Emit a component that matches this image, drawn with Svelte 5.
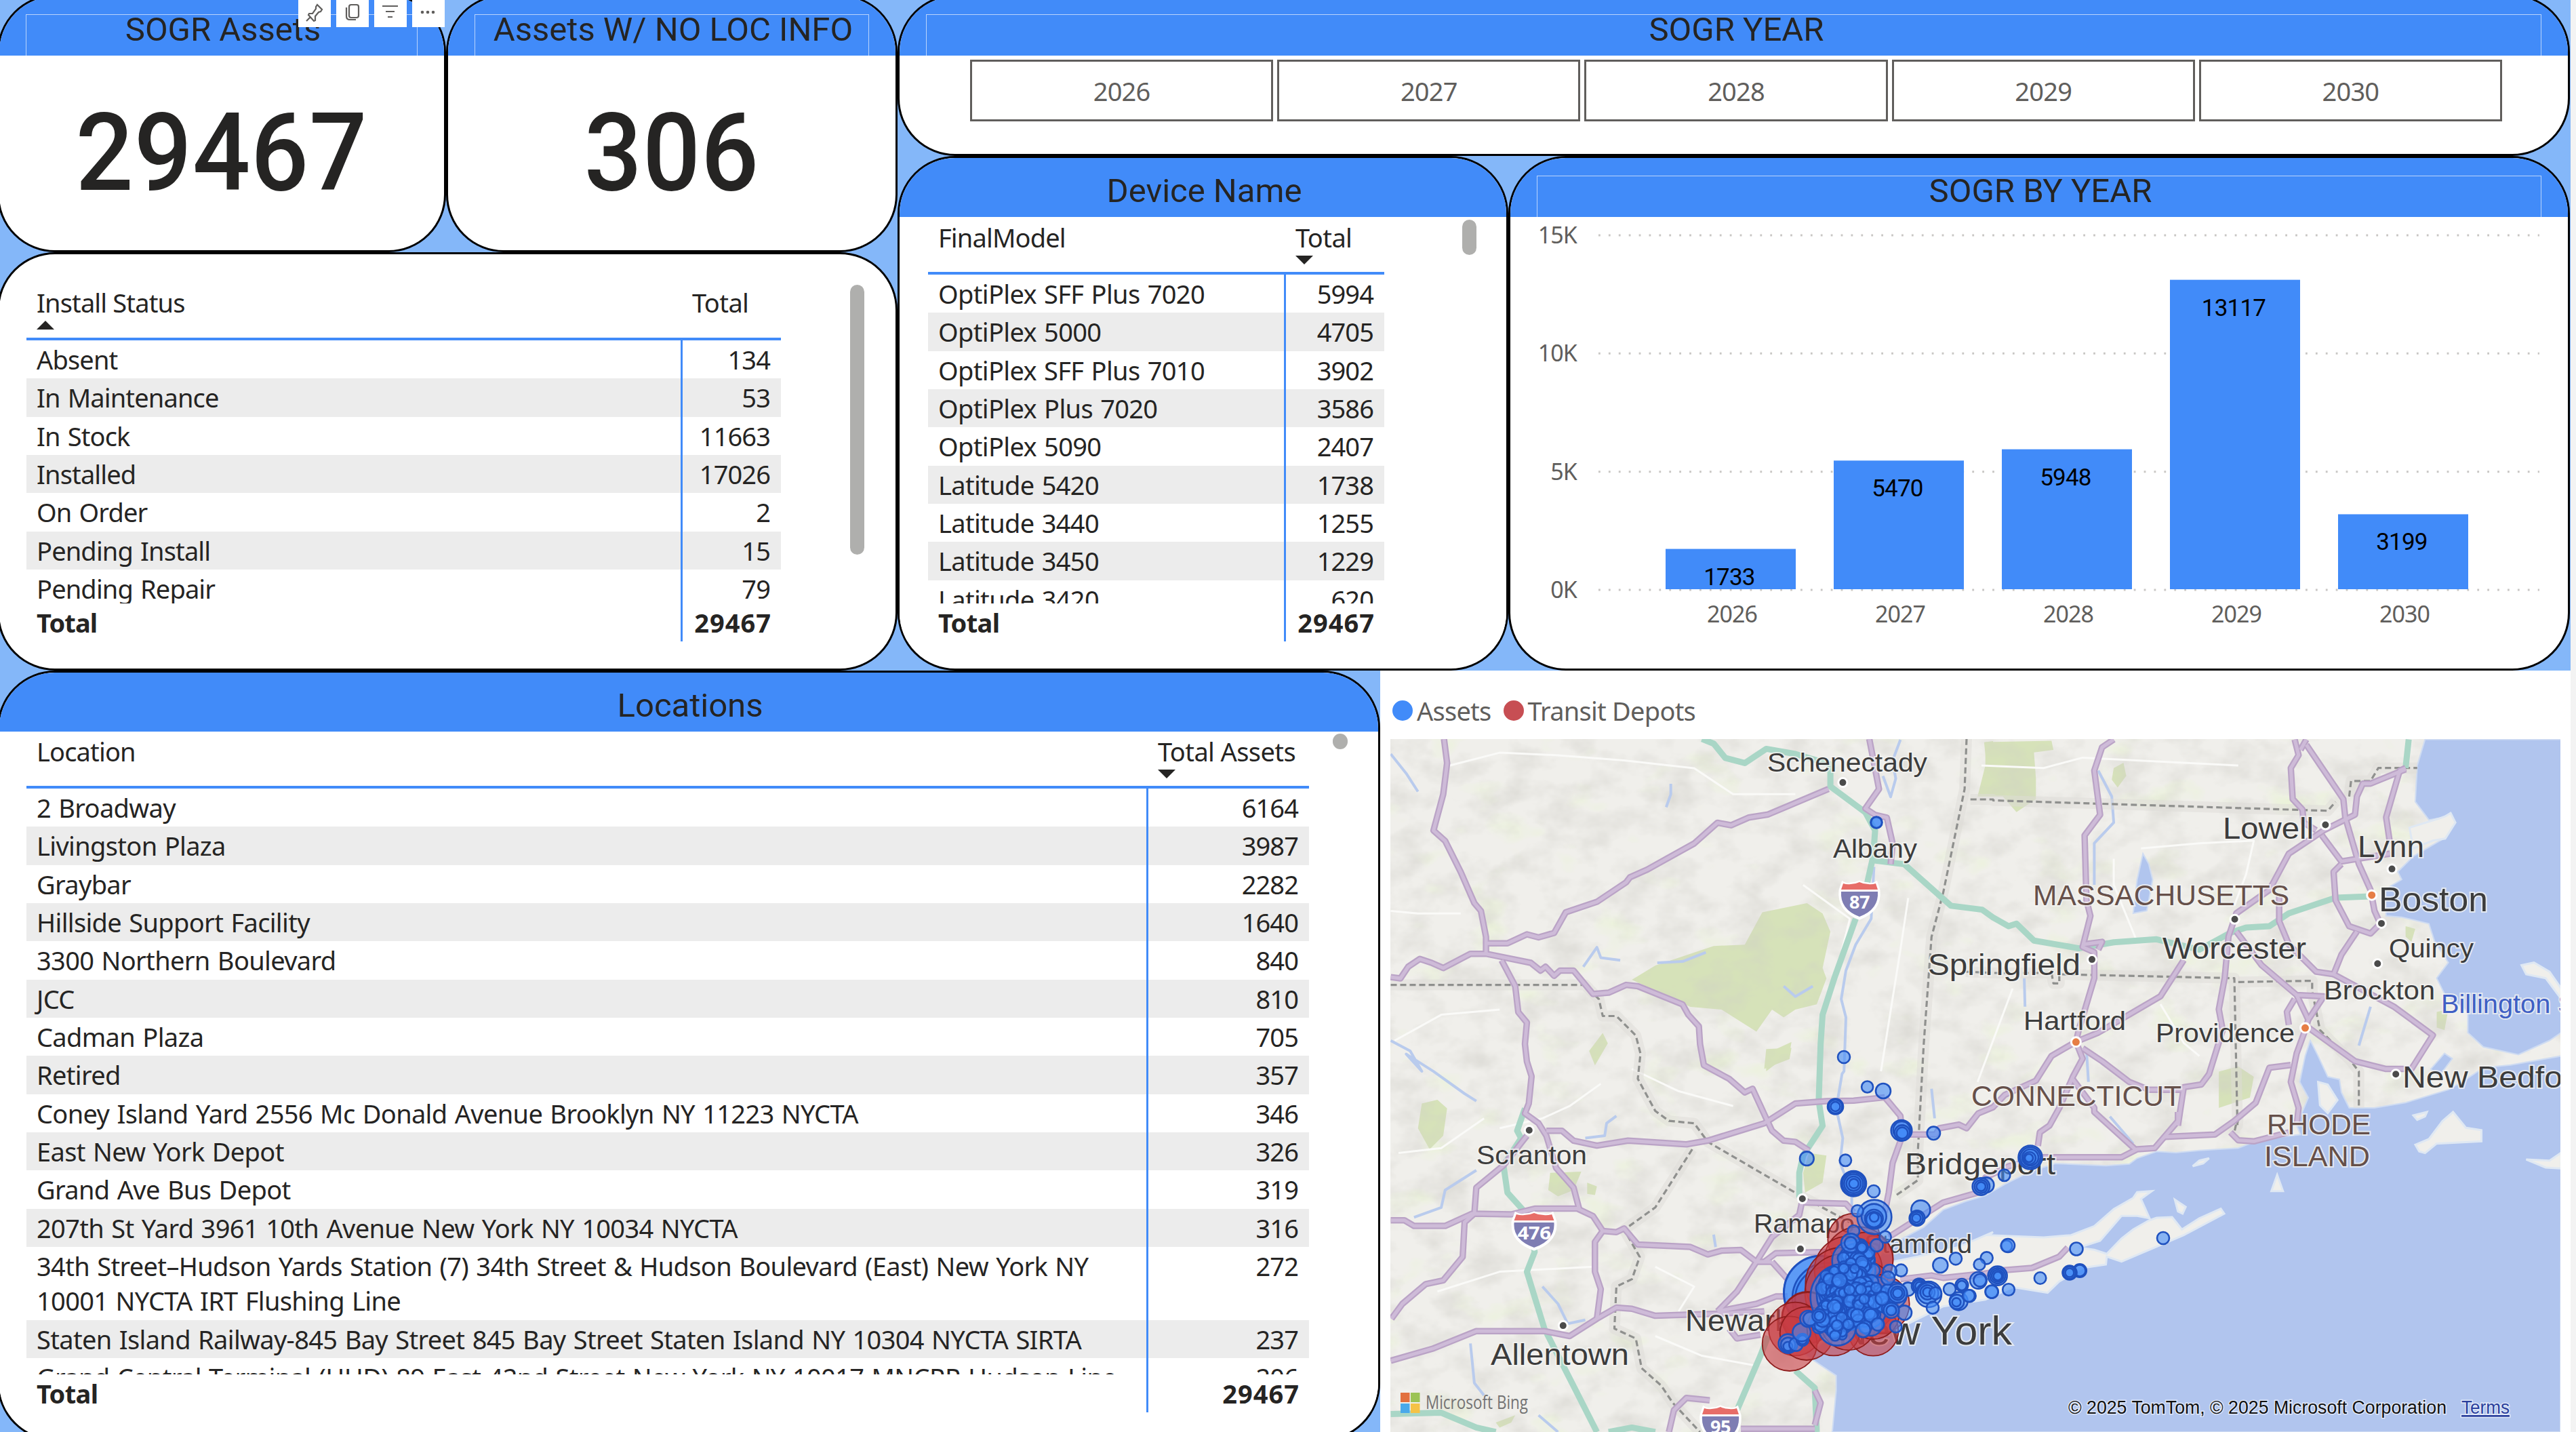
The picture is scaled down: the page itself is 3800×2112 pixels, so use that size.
<script>
  const statusRows = [
    ['Absent', '134'], ['In Maintenance', '53'], ['In Stock', '11663'], ['Installed', '17026'],
    ['On Order', '2'], ['Pending Install', '15'], ['Pending Repair', '79']
  ];
  const deviceRows = [
    ['OptiPlex SFF Plus 7020', '5994'], ['OptiPlex 5000', '4705'], ['OptiPlex SFF Plus 7010', '3902'],
    ['OptiPlex Plus 7020', '3586'], ['OptiPlex 5090', '2407'], ['Latitude 5420', '1738'],
    ['Latitude 3440', '1255'], ['Latitude 3450', '1229'], ['Latitude 3420', '620']
  ];
  const locationRows = [
    ['2 Broadway', '6164'], ['Livingston Plaza', '3987'], ['Graybar', '2282'], ['Hillside Support Facility', '1640'],
    ['3300 Northern Boulevard', '840'], ['JCC', '810'], ['Cadman Plaza', '705'], ['Retired', '357'],
    ['Coney Island Yard 2556 Mc Donald Avenue Brooklyn NY 11223 NYCTA', '346'], ['East New York Depot', '326'],
    ['Grand Ave Bus Depot', '319'], ['207th St Yard 3961 10th Avenue New York NY 10034 NYCTA', '316'],
    ['34th Street–Hudson Yards Station (7) 34th Street & Hudson Boulevard (East) New York NY 10001 NYCTA IRT Flushing Line', '272'],
    ['Staten Island Railway-845 Bay Street 845 Bay Street Staten Island NY 10304 NYCTA SIRTA', '237'],
    ['Grand Central Terminal (HHD) 89 East 42nd Street New York NY 10017 MNCRR Hudson Line', '206']
  ];
  const years = ['2026', '2027', '2028', '2029', '2030'];
  const values = [1733, 5470, 5948, 13117, 3199];

  // Chart geometry: the value axis runs from 0 to 15K over 523 units.
  const zeroY = 550;
  const yOf = (v) => zeroY - (v / 15000) * 523;
  const bars = values.map((v, i) => ({ v, x: 229 + i * 248, y: yOf(v), year: years[i] }));
  const ticks = [15, 10, 5, 0].map((k) => ({ label: k + 'K', y: yOf(k * 1000) }));

  // Map tiles: origin and scale of each tile's own grid.
  const tiles = {
    nw: [2040, 980, 0.57398, 0.38265],
    ne: [2900, 1060, 0.57398, 0.38265],
    sw: [2040, 1540, 0.57398, 0.3648],
    se: [2900, 1640, 0.57398, 0.33333],
    ny: [2560, 1660, 0.33333, 0.33333],
    pg: [0, 0, 1, 1]
  };
  // "nw 1,2 3,4 sw 5,6" -> map coordinates
  function pts(spec) {
    let t = tiles.pg;
    const out = [];
    for (const tok of spec.trim().split(/\s+/)) {
      if (tiles[tok]) t = tiles[tok];
      else {
        const [x, y] = tok.split(',').map(Number);
        out.push((t[0] + x * t[2]).toFixed(1) + ',' + (t[1] + y * t[3]).toFixed(1));
      }
    }
    return out.join(' ');
  }

  const water = [
    'ne 1180,80 1160,180 1155,320 1190,390 1230,380 1245,362 1258,400 1230,460 1150,530 1110,590 1120,620 1075,660 1080,760 1120,765 1190,790 1205,860 1240,940 1210,1000 1230,1060 1290,1130 1290,1210 1330,1265 1420,1295 1500,1240 1530,1210 1530,80',
    'ne 1530,1300 1400,1335 1330,1345 1285,1390 1240,1430 1130,1480 1050,1500 985,1500 965,1440 960,1390 930,1380 905,1300 885,1240 872,1300 858,1400 880,1460 850,1568 se 860,100 760,120 700,160 600,170 540,180 490,175 440,205 420,230 360,238 230,228 170,260 100,320 50,370 0,395 sw 1440,670 1390,740 1330,790 1300,800 1250,930 1200,1100 1120,1220 1080,1250 1165,1340 1165,1400 1155,1568 pg 3777,2112',
    'ne 455,520 470,560 480,620 465,740 430,750 440,620',
    'ne 1230,1290 1250,1310 1215,1380 1195,1350'
  ];
  const land = [
    'ne 1215,385 1232,376 1246,364 1258,400 1232,462 1200,470 1150,500 1140,420',
    'sw 1230,1000 1260,930 1310,880 1400,850 1480,820 1568,760 se 60,545 200,555 270,545 330,505 380,430 430,380 440,355 478,350 450,385 472,470 440,460 400,460 345,570 290,600 330,610 362,628 400,560 430,520 470,480 490,468 530,465 555,520 600,470 655,428 664,450 560,545 400,662 362,640 360,675 300,690 240,750 210,800 120,775 50,830 sw 1440,1060 1350,1130 1250,1150',
    'ne 1428,950 1460,940 1500,975 1530,1040 1530,1080 1490,1000 1440,985',
    'se 1155,145 1190,120 1225,40 1252,0 1285,70 1325,80 1325,130 1210,140 1180,182 1165,175',
    'se 1440,210 1500,215 1530,180 1530,250 1490,246',
    'se 800,278 815,350 785,350',
    'se 537,388 565,420 557,450 545,440',
    'se 583,240 600,215 625,205 610,228',
    'se 1150,15 1185,0 1180,20 1160,35',
    'ne 905,1400 930,1410 955,1470 930,1520 910,1490'
  ];
  const parks = [
    'nw 975,955 1090,920 1130,960 1150,1030 1130,1170 1140,1210 1115,1310 1060,1330 1030,1360 1000,1330 960,1415 870,1330 790,1320 690,1250 640,1215 700,1160 850,1085 930,1080',
    'ne 50,90 220,85 225,120 175,130 180,230 180,310 130,360 95,300 30,300 50,180',
    'ne 380,190 405,170 412,220 390,265 375,235',
    'nw 1545,300 1568,295 1568,500 1530,500 1555,430',
    'nw 985,1500 1050,1455 1045,1500 985,1568',
    'sw 985,20 1050,15 1045,60 980,100',
    'sw 100,240 140,225 165,260 155,370 120,425 90,340',
    'sw 430,520 510,515 490,590 450,615 425,590',
    'sw 1095,440 1140,450 1130,560 1085,600 1080,520',
    'sw 525,560 550,575 545,610 525,605',
    'nw 530,1490 565,1420 578,1460 545,1545',
    'sw 290,1530 340,1500 330,1530 300,1550',
    'ne 650,1360 700,1340 740,1380 730,1460 650,1500',
    'ne 1130,800 1155,810 1145,860 1130,840',
    'ne 1210,1130 1240,1120 1230,1200 1210,1190'
  ];
  const rivers = [
    'nw 20,345 60,420 90,490',
    'nw 1330,290 1310,370 1318,440 1305,510 1285,430',
    'nw 740,460 740,500 728,550',
    'nw 1262,780 1255,980 1215,1080 1190,1180 1178,1290 1190,1360 1185,1568 sw 1180,120 1165,260 1182,380 1175,480 1205,600 1205,700',
    'nw 515,1165 550,1090 560,1130 610,1140',
    'nw 705,1150 770,1145 830,1110',
    'nw 1030,1240 1060,1280 1105,1240',
    'nw 20,1450 70,1490 100,1568 sw 60,40 130,110 210,200 240,230',
    'sw 240,510 160,590 150,660 80,700',
    'sw 520,380 570,370 575,320 600,290',
    'ne 340,200 375,300 380,400 330,480 330,640',
    'ne 150,1000 152,1110',
    'ne 310,1280 315,1400',
    'sw 1410,180 1418,300',
    'sw 410,980 450,1050 475,1130 520,1115',
    'sw 225,1210 235,1370 260,1420',
    'sw 400,1500 450,1568',
    'sw 850,770 855,820',
    'ne 1040,1110 1010,1260',
    'se 370,20 430,140'
  ];
  const purple = [
    'nw 157,287 165,380 155,500 130,640 160,680 200,800 235,920 252,950 265,1050 265,1115',
    'nw 265,1075 320,1075 370,1040 400,1052 440,1035 470,955 550,915 625,840 635,820 680,790 800,690 860,610 895,620 940,590 990,578 1145,480',
    'nw 20,1205 45,1210 65,1165 95,1135 125,1150 155,1170 225,1115 265,1115 380,1150 405,1180 418,1165 440,1200 455,1180 490,1180 540,1270 580,1265 625,1235 655,1240 770,1310 785,1350 812,1395 815,1463 sw 825,85 890,140 930,195 950,180 985,300 1000,350 1030,390 1060,395 1095,430',
    'nw 305,1140 340,1240 348,1340 370,1380 365,1463 sw 370,70 382,130 375,240 365,280 400,320 420,370 445,500 490,580 505,670',
    'sw 20,712 55,712 80,735 160,735 230,685 330,688 390,665 500,665 540,695 565,755 600,760 620,745 655,810 790,820 835,850 870,835 920,832 960,880 1000,880',
    'sw 370,370 310,490 240,580 235,685 210,720 205,860 155,955 110,970 50,1050 22,1110',
    'sw 420,350 460,350 490,390 550,410 630,390 780,405 835,390 980,320 1060,240 1140,230 1210,228 1290,215',
    'sw 565,755 545,800 545,920 560,990 550,1110',
    'sw 20,1280 130,1230 240,1160 415,1160 480,1180 550,1110 600,1065 640,1070 700,1098 860,1090 980,1080',
    'sw 1078,630 1070,690 1000,780 960,880 910,1000 860,1080',
    'sw 860,1080 960,1050 1010,1020 1040,1020',
    'sw 1080,640 1190,645 1210,680',
    'sw 980,880 1010,845 1140,840',
    'sw 1000,880 1040,950',
    'sw 1290,215 1330,290 1335,370 1310,480 1300,600 1290,680',
    'sw 1340,365 1420,365 1430,340 1480,325 1500,340 1530,280 1568,255 ne 100,1450 180,1395 220,1300 283,1245',
    'sw 1300,780 1400,680 1440,640 1530,600 se 50,290 110,240 200,200 400,200 440,165 485,160 545,40 545,0',
    'sw 890,1150 910,1190 970,1175',
    'sw 735,1568 748,1480 780,1430 840,1440',
    'sw 920,1555 1110,1555',
    'sw 1110,1540 1125,1450 1110,1400',
    'sw 1330,950 1410,935 1440,945 1530,930 se 0,730 100,700 170,690 240,640 262,600',
    'nw 1250,287 1275,480 1240,555 1265,580 1295,590 1310,690 1305,770',
    'ne 380,80 350,110 330,200 345,370 305,450 310,700 320,760 300,880 330,900 330,1000 290,1200 283,1245',
    'ne 300,870 350,860 340,890',
    'ne 845,80 855,140 835,190 840,310 865,350 868,400 900,430',
    'ne 875,80 860,120',
    'ne 875,100 970,310 975,380 1010,560 1040,660 1050,740 1065,790',
    'ne 1130,190 1115,200 1080,380 1090,480',
    'ne 1130,195 1040,250 1020,250 1005,300 1000,370 920,430 830,520 780,660 695,750 675,840 665,1000 650,1120 660,1200 625,1370 605,1410 560,1420 545,1568',
    'ne 915,450 965,550 1090,520',
    'ne 965,560 945,590 950,700 985,800 1040,828 1065,790',
    'ne 805,680 805,780 830,870 900,975 945,985 965,910 1005,820',
    'ne 695,820 760,950 850,1065 920,1070 880,1160',
    'ne 850,1065 880,1160 872,1200 850,1290 835,1400 855,1500 850,1568',
    'ne 845,1080 825,1130 830,1180',
    'ne 945,985 1100,1110 1200,1220 1145,1350 1080,1350 1000,1320 880,1190',
    'ne 835,1335 780,1345 745,1480 690,1550 se 640,100 510,110',
    'ne 283,1245 300,1310 275,1380 240,1500 215,1568 se 190,90 185,150',
    'ne 300,1270 350,1320 420,1400 470,1430 560,1430',
    'ne 275,1390 330,1500 se 330,0 435,165',
    'ne 283,1245 340,1210 500,1070 560,930',
    'se 680,90 700,125 740,130 830,90'
  ];
  const green = [
    'nw 820,287 850,305 880,360 930,380 985,325 1060,345 1150,385 1150,470 1240,570 1265,640 1260,740 1245,840',
    'nw 1260,755 1340,770 1460,930 1540,945 1568,975 ne 110,800 130,790 175,855 290,885 380,862 490,850 600,890 680,825 720,805 780,800 830,750 950,690 1040,685',
    'nw 1215,980 1160,1210 1130,1350 1125,1463 sw 1120,230 1130,330 1080,450 1070,520 1070,620',
    'sw 365,260 345,350 355,380 310,490 320,600 360,670 385,800 390,840 370,920 415,1150 550,1568',
    'sw 20,1495 150,1490 240,1550 290,1568',
    'sw 580,1568 640,1550 700,1568',
    'sw 990,1180 970,1260 910,1480',
    'sw 1060,1320 1110,1390 1115,1568',
    'ne 1138,80 1130,190'
  ];
  const borders = [
    'nw 20,1235 520,1235 555,1290 565,1355 600,1355 650,1430 662,1500 sw 655,140 700,270 735,310 800,320 835,395 1070,610 1200,720',
    'nw 1500,287 1495,480 1440,880 1410,1050 1390,1463 sw 1375,430 1375,550 1320,610',
    'nw 1510,520 1568,520 ne 70,315 930,355 950,320',
    'ne 985,300 990,240 1040,240 1060,190 1160,190',
    'ne 0,975 70,980 220,980 225,1020 240,1020 240,985 690,1000 698,1568 se 700,10 690,90',
    'ne 700,1015 890,1010 890,1050 910,1200 990,1320 1010,1360 1010,1500',
    'sw 795,425 700,660 620,750 660,860 640,950 600,980 595,1150 650,1190 665,1310 715,1380 745,1450 815,1568'
  ];
  const trails = [
    'nw 170,390 300,340 450,350 620,370 800,400 900,500 1060,500',
    'nw 20,950 90,960 200,960',
    'nw 1080,850 1200,980 1180,1100',
    'nw 1350,900 1330,1100 1280,1568',
    'nw 30,1450 150,1350 300,1330',
    'sw 560,160 480,250 410,300 300,340',
    'sw 40,440 150,420 260,300',
    'sw 640,100 760,190 900,250',
    'sw 700,900 800,980 760,1080',
    'sw 140,1000 300,920 540,900',
    'sw 700,1180 820,1260 960,1300',
    'ne 450,500 600,480 740,470 720,600 690,720',
    'ne 380,540 380,640 440,860',
    'ne 120,1040 80,1200 30,1400',
    'ne 500,1100 560,1250 600,1300',
    'ne 40,180 200,190 300,150 700,180'
  ];

  // name, x, baseline, size, width, kind
  const labels = [
    ['Schenectady', 2607, 1138, 38, 236], ['Albany', 2704, 1265, 38, 124], ['Springfield', 2844, 1438, 45, 225],
    ['Lowell', 3279, 1237, 45, 134], ['Lynn', 3478, 1264, 45, 98], ['Boston', 3509, 1344, 50, 161],
    ['Quincy', 3524, 1412, 39, 125], ['Worcester', 3190, 1414, 45, 212], ['Brockton', 3428, 1474, 39, 164],
    ['Hartford', 2985, 1519, 38, 151], ['Providence', 3180, 1537, 38, 205], ['New Bedford', 3544, 1604, 45, 279],
    ['MASSACHUSETTS', 2999, 1335, 42, 378, 'state'], ['CONNECTICUT', 2908, 1631, 42, 310, 'state'],
    ['RHODE', 3344, 1673, 42, 153, 'state'], ['ISLAND', 3340, 1720, 42, 156, 'state'],
    ['Billington Sea', 3601, 1494, 38, 243, 'sea'], ['Scranton', 2178, 1717, 39, 163], ['Allentown', 2199, 2013, 44, 204],
    ['Newark', 2486, 1963, 44, 155], ['Ramapo', 2587, 1818, 39, 149], ['Stamford', 2750, 1848, 39, 159],
    ['New York', 2711, 1983, 60, 257], ['Bridgeport', 2810, 1732, 45, 222]
  ];
  const towns = [
    'nw 1182,455', 'ne 924,409', 'ne 1095,579', 'ne 1068,789', 'ne 1058,944', 'ne 691,773', 'ne 324,928',
    'ne 1105,1370', 'sw 376,348', 'sw 463,1138', 'sw 1078,625', 'sw 1073,828'
  ].map((s) => pts(s).split(','));
  const capitals = ['ne 1043,680', 'ne 872,1192', 'ne 283,1246'].map((s) => pts(s).split(','));
  const shields = [['87', 2743, 1301, 1], ['476', 2263, 1789, 1.09], ['95', 2538, 2075, 1]];

  const ny = (list) => list.map(([x, y, r]) => [2560 + x / 3, 1660 + y / 3, r / 3]);
  const under = ny([[378, 740, 164], [378, 740, 163], [410, 765, 158], [410, 770, 146]]);
  const depots = ny([
    [525, 505, 116], [545, 600, 152], [500, 640, 150], [470, 700, 160], [480, 740, 172], [580, 590, 118], [550, 760, 165],
    [640, 790, 130], [320, 850, 115], [320, 850, 112], [265, 900, 118], [240, 965, 121], [315, 920, 118], [610, 908, 111],
    [435, 900, 118], [500, 872, 122], [610, 830, 115]
  ]);
  // Dense core of the city, filled with a repeatable scatter.
  let seed = 11;
  const rnd = () => (seed = (seed * 16807) % 2147483647) / 2147483647;
  const blobs = [
    [535, 590, 62, 26], [540, 650, 70, 26], [460, 710, 75, 34], [530, 760, 110, 64],
    [590, 770, 80, 30], [450, 850, 75, 38], [555, 820, 65, 24], [450, 905, 45, 16], [370, 870, 28, 8], [660, 770, 45, 12]
  ];
  const core = blobs.flatMap(([cx, cy, spread, n]) =>
    Array.from({ length: n }, () => {
      const a = rnd() * Math.PI * 2;
      const d = Math.sqrt(rnd()) * spread;
      return [cx + Math.cos(a) * d, cy + Math.sin(a) * d, 20 + rnd() * 13];
    })
  );
  const assets = [
    ...ny([
      [480, 760, 148], [490, 750, 130], [480, 720, 110], [455, 720, 90], [520, 600, 92], [535, 600, 78], [450, 890, 84],
      [540, 640, 80], [450, 740, 80], [560, 770, 90], [620, 745, 76], [590, 820, 76], [450, 850, 80], [600, 880, 50],
      [440, 715, 72], [440, 715, 62], [440, 720, 50],
      [700, 750, 58], ...core,
      [316, 146, 31], [487, 154, 26], [523, 257, 56], [523, 257, 50], [523, 257, 42], [523, 257, 32], [524, 257, 21],
      [612, 291, 27], [615, 405, 76], [613, 402, 55], [613, 412, 40], [613, 416, 34], [614, 406, 20], [540, 378, 26],
      [735, 22, 46], [736, 20, 38], [738, 32, 34], [738, 33, 25], [877, 34, 29], [1110, 263, 34], [1087, 270, 38],
      [1087, 270, 29], [1087, 270, 20], [1190, 220, 26], [820, 373, 42], [804, 410, 34], [802, 410, 28], [801, 410, 19],
      [663, 493, 26], [625, 530, 28], [523, 467, 26], [510, 520, 42], [510, 520, 27], [560, 538, 27], [560, 540, 21],
      [733, 641, 27], [683, 645, 30], [675, 675, 30], [907, 618, 33], [975, 589, 27], [1112, 586, 27], [1080, 615, 25],
      [1200, 533, 25], [764, 724, 30], [813, 710, 33], [813, 710, 26], [815, 711, 19], [855, 747, 57], [852, 742, 46],
      [850, 738, 32], [850, 737, 20], [885, 742, 27], [873, 806, 27], [948, 724, 27], [1002, 706, 28], [1002, 708, 21],
      [988, 777, 40], [980, 780, 32], [978, 782, 19], [1037, 754, 27], [1075, 685, 37], [1082, 685, 28], [1160, 665, 42],
      [1160, 665, 34], [1160, 665, 26], [1161, 666, 19], [1135, 736, 28], [748, 828, 32], [710, 890, 26], [690, 818, 34],
      [690, 818, 22], [718, 742, 42], [718, 742, 30], [718, 742, 21], [650, 765, 30], [623, 718, 23], [555, 725, 23],
      [505, 727, 23], [480, 632, 22], [528, 633, 20], [575, 892, 28], [565, 905, 32], [630, 880, 28], [233, 965, 42], [233, 970, 32],
      [232, 977, 20], [268, 968, 30], [297, 948, 27], [297, 948, 20], [293, 915, 40], [322, 855, 36], [330, 855, 30],
      [370, 842, 30], [370, 842, 20], [570, 768, 22], [470, 850, 24], [450, 885, 24], [500, 880, 24]
    ]),
    [2768, 1213, 8.5], [2768, 1213, 8], [2720, 1559, 9], [2754.6, 1603, 8.5], [2778, 1609, 11], [2707.5, 1632, 11.5], [2707.5, 1632, 10],
    [2707.5, 1632, 7], [2995, 1707, 17.5], [2995, 1707, 15], [2995, 1707, 12], [2994, 1708, 9], [2993, 1708, 6],
    [2962, 1837, 10], [3063, 1842, 9.5], [3191, 1826, 9], [3068, 1874, 9.8], [3068, 1874, 8.5], [3053, 1877, 10.5],
    [3053, 1877, 9], [3053, 1877, 6.5], [3009.6, 1885, 8.7], [2938, 1905, 9.5], [2963, 1902, 8.8], [2904, 1911, 9]
  ];
</script>

{#snippet grid(kind, heads, rows, sorted)}
  <div class="table {kind}">
    <div class="head">
      <div class="cell name">
        <span>{heads[0]}</span>
        {#if sorted === 'asc'}<i class="up"></i>{/if}
      </div>
      <div class="cell num">
        <span>{heads[1]}</span>
        {#if sorted === 'desc'}<i class="down"></i>{/if}
      </div>
    </div>
    <div class="rows">
      {#each rows as [name, n]}
        <div class="row"><div class="cell name">{name}</div><div class="cell num">{n}</div></div>
      {/each}
    </div>
    <div class="row total"><div class="cell name">Total</div><div class="cell num">29467</div></div>
  </div>
{/snippet}

<div class="page">
  <div class="report">
    <div class="top">
      <div class="left">
        <div class="kpis">
          <section class="card">
            <header><h2 class="framed">SOGR Assets</h2></header>
            <p class="big">29467</p>
          </section>
          <section class="card">
            <header><h2 class="framed tight">Assets W/ NO LOC INFO</h2></header>
            <p class="big">306</p>
          </section>
          <div class="tools">
            <button aria-label="Pin"><svg viewBox="0 0 48 40"><path d="M28 7l7 7-2 3-3 1-5 6v6l-2 1-8-9 1-2 5 0 5-7 0-3zM18 25l-6 6" /></svg></button>
            <button aria-label="Copy"><svg viewBox="0 0 48 40"><rect x="19" y="7" width="14" height="19" rx="3" /><path d="M15 11v13q0 5 5 5h9" /></svg></button>
            <button aria-label="Filters"><svg viewBox="0 0 48 40"><path d="M12 9h23M17 17h13M20 25h7" /></svg></button>
            <button aria-label="More options"><svg viewBox="0 0 48 40"><circle cx="15" cy="18" r="1.2" /><circle cx="23" cy="18" r="1.2" /><circle cx="31" cy="18" r="1.2" /></svg></button>
          </div>
        </div>
        <section class="card status">
          {@render grid('install', ['Install Status', 'Total'], statusRows, 'asc')}
          <div class="thumb"></div>
        </section>
      </div>
      <div class="right">
        <section class="card year">
          <header><h2 class="framed">SOGR YEAR</h2></header>
          <div class="slicer">
            {#each years as y}<button>{y}</button>{/each}
          </div>
        </section>
        <div class="pair">
          <section class="card device">
            <header><h2>Device Name</h2></header>
            <div class="body">
              {@render grid('models', ['FinalModel', 'Total'], deviceRows, 'desc')}
              <div class="thumb"></div>
            </div>
          </section>
          <section class="card chart">
            <header><h2 class="framed">SOGR BY YEAR</h2></header>
            <svg class="plot" viewBox="0 0 1560 660">
              {#each ticks as t}
                <line class="gridline" x1="130" x2="1518" y1={t.y} y2={t.y} />
                <text class="tick" x="98" y={t.y + 12} text-anchor="end">{t.label}</text>
              {/each}
              {#each bars as b}
                <rect class="bar" x={b.x} y={b.y} width="192" height={zeroY - b.y - 1} />
                <text class="value" x={b.x + 94} y={b.y + 53} text-anchor="middle">{b.v}</text>
                <text class="tick" x={b.x + 98} y="598" text-anchor="middle">{b.year}</text>
              {/each}
            </svg>
          </section>
        </div>
      </div>
    </div>

    <div class="bottom">
      <section class="card locations">
        <header><h2>Locations</h2></header>
        <div class="body">
          {@render grid('places', ['Location', 'Total Assets'], locationRows, 'desc')}
          <div class="thumb"></div>
        </div>
      </section>
      <section class="mapbox">
        <div class="legend">
          <i class="blue"></i><span>Assets</span><i class="red"></i><span>Transit Depots</span>
        </div>
        <svg class="map" viewBox="2051 1090 1726 1022">
          <defs>
            <filter id="relief" x="0" y="0" width="1" height="1">
              <feTurbulence type="fractalNoise" baseFrequency="0.018 0.026" numOctaves="4" seed="4" />
              <feColorMatrix values="0 0 0 0 0.62  0 0 0 0 0.61  0 0 0 0 0.57  1.1 0 0 0 -0.46" />
            </filter>
            <filter id="woods" x="0" y="0" width="1" height="1">
              <feTurbulence type="fractalNoise" baseFrequency="0.012 0.02" numOctaves="3" seed="9" />
              <feColorMatrix values="0 0 0 0 0.83  0 0 0 0 0.89  0 0 0 0 0.70  0 3.4 0 0 -2.05" />
            </filter>
          </defs>
          <rect class="ground" x="2051" y="1090" width="1726" height="1022" />
          <rect x="2051" y="1090" width="1726" height="1022" filter="url(#woods)" />
          {#each parks as p}<polygon class="park" points={pts(p)} />{/each}
          <rect x="2051" y="1090" width="1726" height="1022" filter="url(#relief)" />
          {#each water as p}<polygon class="water" points={pts(p)} />{/each}
          {#each land as p}<polygon class="ground shore" points={pts(p)} />{/each}
          {#each trails as p}<polyline class="trail" points={pts(p)} />{/each}
          {#each rivers as p}<polyline class="river" points={pts(p)} />{/each}
          {#each borders as p}<polyline class="haze" points={pts(p)} /><polyline class="border" points={pts(p)} />{/each}
          {#each green as p}<polyline class="toll" points={pts(p)} />{/each}
          {#each purple as p}<polyline class="road" points={pts(p)} />{/each}
          {#each purple as p}<polyline class="road in" points={pts(p)} />{/each}
          {#each shields as [n, x, y, k]}
            <g transform="translate({x} {y}) scale({k} 1)">
              <path class="plate" d="M-25 0q6 4 12 2q7 0 13-3q6 3 13 3q6 2 12-2l4 12q3 30-29 42q-32-12-29-42z" />
              <path class="crown" d="M-24 2q6 2 11 1q7 0 13-3q6 3 13 3q5 1 11-1l3 9h-54z" />
              <path class="field" d="M-27 14h54q2 26-27 37q-29-11-27-37z" />
              <text x="0" y="39" text-anchor="middle">{n}</text>
            </g>
          {/each}
          {#each towns as [x, y]}<circle class="town" cx={x} cy={y} r="6.5" />{/each}
          {#each capitals as [x, y]}<circle class="town cap" cx={x} cy={y} r="7" />{/each}
          {#each labels as [name, x, y, size, w, kind]}
            <text class="place {kind ?? ''}" {x} {y} font-size={size} textLength={w} lengthAdjust="spacingAndGlyphs">{name}</text>
          {/each}
          {#each under as [x, y, r]}<circle class="asset" cx={x} cy={y} {r} />{/each}
          {#each depots as [x, y, r]}<circle class="depot" cx={x} cy={y} {r} />{/each}
          {#each assets as [x, y, r]}<circle class="asset" cx={x} cy={y} {r} />{/each}
          <rect x="2066" y="2054" width="13.5" height="14" fill="#e2703f" />
          <rect x="2081" y="2054" width="13.5" height="14" fill="#9cc355" />
          <rect x="2066" y="2070" width="13.5" height="14" fill="#4aa9ea" />
          <rect x="2081" y="2070" width="13.5" height="14" fill="#f5c246" />
          <text class="bing" x="2103" y="2078" textLength="151" lengthAdjust="spacingAndGlyphs">Microsoft Bing</text>
          <text class="legal" x="3051" y="2085" textLength="558" lengthAdjust="spacingAndGlyphs">© 2025 TomTom, © 2025 Microsoft Corporation</text>
          <text class="legal terms" x="3631" y="2085" textLength="71" lengthAdjust="spacingAndGlyphs">Terms</text>
        </svg>
      </section>
    </div>
  </div>
</div>

<style>
  :global(body) { margin: 0; }
  .page {
    width: 3800px; height: 2112px; overflow: hidden; background: #f3f3f3;
    font-family: "Noto Sans", "Open Sans", sans-serif; font-size: 38px; letter-spacing: -0.9px; color: #252423;
  }
  .page * { box-sizing: border-box; }
  .report { width: 3796px; margin: -8px 0 0 -4px; background: #84b7f9; }
  .top { display: flex; height: 997px; }
  .left { width: 1328px; display: flex; flex-direction: column; }
  .right { width: 2468px; display: flex; flex-direction: column; }
  .kpis { position: relative; display: flex; height: 380px; }
  .kpis .card:nth-child(1) { width: 662px; }
  .kpis .card:nth-child(2) { width: 666px; }
  .card { border: 3px solid #000; border-radius: 85px; background: #fff; overflow: hidden; }
  header { height: 87px; padding: 26px 39px 0; background: #418bf9; }
  h2 {
    margin: 0; height: 61px; border: 1px solid transparent; border-bottom: 0; padding: 1px 0 0 4px;
    font: 400 49px/42px Roboto, sans-serif; letter-spacing: 0; text-align: center; white-space: nowrap;
  }
  h2.framed { border-color: #b9d4fc; }
  .year h2 { padding-left: 8px; }
  .big {
    margin: 0; padding-top: 55px; font: 500 159px/178px Roboto, sans-serif; letter-spacing: 1px;
    text-align: center; transform: scaleX(0.943);
  }
  .tools { position: absolute; top: 8px; left: 444px; display: flex; gap: 8px; }
  .tools button { width: 48px; height: 40px; padding: 0; border: 0; background: #fff; }
  .tools svg { display: block; width: 48px; height: 40px; fill: none; stroke: #605e5c; stroke-width: 2.2; }

  .status { flex: 1; display: flex; padding: 45px 0 0 40px; }
  .table { display: flex; flex-direction: column; }
  .head { display: flex; border-bottom: 4px solid #418bf9; }
  .cell { padding: 3px 16px 2px 15px; line-height: 51.35px; }
  .name { flex: 1; letter-spacing: -0.66px; word-spacing: 2px; }
  .install .name { letter-spacing: -0.85px; }
  .head .name { letter-spacing: -0.85px; word-spacing: 0; }
  .row { display: flex; }
  .row .num { text-align: right; border-left: 3px solid #418bf9; }
  .rows { overflow: hidden; }
  .rows .row:nth-child(even) { background: #ececec; }
  .total { font-weight: 700; background: #fff; }
  .total .num { letter-spacing: 1px; padding-right: 14px; padding-left: 0; }
  .head .cell { height: 77px; padding-top: 0; }
  .head .num { padding-left: 17px; letter-spacing: -0.6px; }
  .head span { display: block; height: 53px; line-height: 52px; white-space: nowrap; }
  .head i { display: block; width: 0; height: 0; border: 13px solid transparent; }
  .head .up { border-top: 0; border-bottom: 13px solid #252423; }
  .head .down { border-bottom: 0; border-top: 13px solid #252423; }
  .thumb { background: #afafad; border-radius: 11px; }

  .install { width: 1113px; }
  .install .num { width: 148px; }
  .install .head .cell { height: 78px; }
  .install .rows { height: 388px; }
  .status .thumb { width: 21px; height: 398px; margin-left: 102px; }

  .year { height: 238px; width: 2467px; }
  .slicer { display: flex; gap: 6px; padding: 6px 97px 0 104px; }
  .slicer button {
    flex: 1; height: 91px; padding: 0; border: 3px solid #605e5c; background: #fff; color: #605e5c;
    font: 400 38px "Noto Sans", sans-serif; letter-spacing: -0.8px;
  }
  .pair { flex: 1; display: flex; }
  .device { width: 901px; }
  .body { display: flex; background: #fff; }
  .device .body { padding-left: 42px; padding-top: 4px; }
  .models { width: 673px; }
  .models .num { width: 148px; }
  .models .rows { height: 485px; }
  .device .thumb { width: 21px; height: 52px; margin-left: 115px; }

  .chart { width: 1566px; }
  .plot { display: block; width: 1560px; height: 660px; }
  .gridline { stroke: #c8c6c4; stroke-width: 3; stroke-dasharray: 2.8 12.1; }
  .tick { font: 400 34px "Noto Sans", sans-serif; letter-spacing: -0.9px; fill: #605e5c; }
  .bar { fill: #418bf9; }
  .value { font: 400 35px Roboto, sans-serif; letter-spacing: -0.8px; fill: #000; }

  .bottom { display: flex; height: 1136px; }
  .locations { width: 2040px; }
  .locations .body { padding: 3px 0 0 40px; }
  .places { width: 1892px; }
  .places .num { width: 240px; }
  .places .rows { height: 864px; }
  .locations .thumb { width: 22px; height: 23px; margin-left: 35px; }

  .mapbox { width: 1756px; background: #fff; padding-left: 15px; }
  .legend { display: flex; align-items: center; height: 101px; padding: 16px 0 0 3px; color: #605e5c; font-size: 38px; letter-spacing: -0.75px; }
  .legend i { width: 30px; height: 30px; border-radius: 50%; margin-right: 6px; }
  .legend span { margin-right: 18px; }
  .blue { background: #418bf9; }
  .red { background: #c74e53; }
  .map { display: block; width: 1726px; height: 1022px; }
  .ground { fill: #f0efeb; }
  .shore { stroke: #dfe8f3; stroke-width: 3; }
  .park { fill: #d6e2b9; }
  .water { fill: #b1c5ee; stroke: #cfdcf2; stroke-width: 2; }
  polyline { fill: none; stroke-linejoin: round; }
  .trail { stroke: #fafaf8; stroke-width: 3; }
  .river { stroke: #b9cbed; stroke-width: 4; }
  .haze { stroke: #dddcd8; stroke-width: 16; stroke-opacity: 0.5; }
  .border { stroke: #8f908e; stroke-width: 3.2; stroke-dasharray: 9 5; }
  .toll { stroke: #a9d6c6; stroke-width: 9; }
  .road { stroke: #baa3c6; stroke-width: 9.5; }
  .road.in { stroke: #cebbd8; stroke-width: 5; }
  .plate { fill: #fff; stroke: #fff; stroke-width: 3; }
  .crown { fill: #e76d68; }
  .field { fill: #7e7db3; }
  .map g text { font: 700 27px "Open Sans", "Noto Sans", sans-serif; fill: #fff; letter-spacing: -0.5px; }
  .town { fill: #4b4b4b; stroke: #fff; stroke-width: 3; }
  .town.cap { fill: #e67e45; }
  .place {
    font-family: "Liberation Sans", Arial, sans-serif; letter-spacing: 0; fill: #3c3c3c;
    stroke: #f4f4f2; stroke-opacity: 0.75; stroke-width: 4; paint-order: stroke;
  }
  .place.state { fill: #66504a; }
  .place.sea { fill: #3f5fc4; }
  .asset { fill: #418bf9; fill-opacity: 0.6; stroke: #1f51bf; stroke-width: 2.6; }
  .depot { fill: #c83c42; fill-opacity: 0.6; stroke: #8f1d1d; stroke-width: 1.8; }
  .bing { font: 400 28px "Open Sans", "Noto Sans", sans-serif; fill: #737373; letter-spacing: 0; }
  .legal {
    font: 400 27px "Liberation Sans", Arial, sans-serif; letter-spacing: 0; fill: #111;
    stroke: #fff; stroke-opacity: 0.6; stroke-width: 3; paint-order: stroke;
  }
  .terms { fill: #2a3f9d; text-decoration: underline; }
</style>
